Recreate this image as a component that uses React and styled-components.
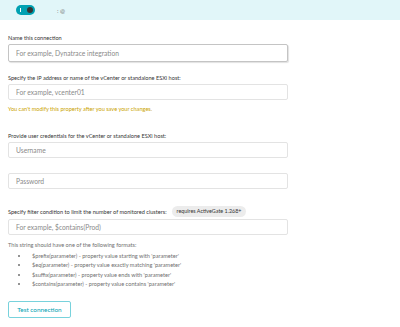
import React from 'react';
import styled, { createGlobalStyle } from 'styled-components';

const formats = [
  ["$prefix(parameter)", "property value starting with 'parameter'"],
  ["$eq(parameter)", "property value exactly matching 'parameter'"],
  ["$suffix(parameter)", "property value ends with 'parameter'"],
  ["$contains(parameter)", "property value contains 'parameter'"],
];

export default function App() {
  return (
    <>
      <GlobalStyle />
      <Banner>
        <Toggle><Knob /></Toggle>
        <BannerText>: @</BannerText>
      </Banner>
      <Form>
        <Label>Name this connection</Label>
        <Input $focused placeholder="For example, Dynatrace integration" />

        <Label $top={12}>Specify the IP address or name of the vCenter or standalone ESXi host:</Label>
        <Input placeholder="For example, vcenter01" />
        <Warning>You can't modify this property after you save your changes.</Warning>

        <Label $top={20}>Provide user credentials for the vCenter or standalone ESXi host:</Label>
        <Input placeholder="Username" />
        <Input $top={15} placeholder="Password" />

        <LabelRow>
          <span>Specify filter condition to limit the number of monitored clusters:</span>
          <Badge>requires ActiveGate 1.268+</Badge>
        </LabelRow>
        <Input placeholder="For example, $contains(Prod)" />
        <Hint>This string should have one of the following formats:</Hint>
        <List>
          {formats.map(([fn, desc]) => (
            <li key={fn}>{fn} - {desc}</li>
          ))}
        </List>
        <Button>Test connection</Button>
      </Form>
    </>
  );
}

const GlobalStyle = createGlobalStyle`
  * { margin: 0; padding: 0; box-sizing: border-box; }
  html, body { background: #fff; font-family: Lato, 'Open Sans', sans-serif; color: #454646; }
`;

const Banner = styled.div`
  height: 20px;
  background: #e1f6f9;
  display: flex;
  align-items: center;
  padding-left: 16px;
  gap: 22px;
`;

const Toggle = styled.div`
  width: 19px;
  height: 10px;
  border-radius: 5px;
  background: #00a1b2;
  position: relative;
  &::before {
    content: '';
    position: absolute;
    left: 4px;
    top: 3px;
    width: 1px;
    height: 4px;
    background: #fff;
  }
`;

const Knob = styled.div`
  position: absolute;
  right: 2px;
  top: 2px;
  width: 6px;
  height: 6px;
  border-radius: 50%;
  background: #353535;
`;

const BannerText = styled.span`
  font-size: 6px;
  color: #777;
`;

const Form = styled.div`
  padding: 0 8px;
  width: 296px;
  display: flex;
  flex-direction: column;
  align-items: flex-start;
`;

const Label = styled.div`
  font-size: 5.6px;
  line-height: 7px;
  color: #353535;
  margin-top: ${p => p.$top ?? 14}px;
  margin-bottom: 3px;
`;

const LabelRow = styled.div`
  display: flex;
  align-items: center;
  gap: 5px;
  font-size: 5.6px;
  color: #353535;
  margin-top: 17px;
  margin-bottom: 2px;
`;

const Badge = styled.span`
  background: #ececec;
  border-radius: 6px;
  padding: 2px 5px;
  line-height: 7px;
  font-size: 5.4px;
  color: #353535;
`;

const Input = styled.input`
  width: 280px;
  height: ${p => (p.$focused ? 18 : 16)}px;
  margin-top: ${p => p.$top ?? 0}px;
  border: 1px solid ${p => (p.$focused ? '#c4c4c4' : '#e3e3e3')};
  border-radius: 2px;
  box-shadow: ${p => (p.$focused ? '1px 1px 1px rgba(0,0,0,0.12)' : 'none')};
  padding: 0 7px;
  font-family: Lato, 'Open Sans', sans-serif;
  font-size: 6.7px;
  outline: none;
  &::placeholder { color: #8a8a8a; }
`;

const Warning = styled.div`
  font-size: 5.6px;
  color: #caa300;
  margin-top: 5px;
`;

const Hint = styled.div`
  font-size: 5.6px;
  color: #707070;
  margin-top: 6px;
`;

const List = styled.ul`
  margin-top: 3px;
  padding-left: 21px;
  font-size: 5.6px;
  color: #707070;
  li { line-height: 9.3px; padding-left: 3px; }
`;

const Button = styled.button`
  margin-top: 13px;
  width: 63px;
  height: 17px;
  border: 1px solid #78d2dc;
  border-radius: 2px;
  background: #fff;
  color: #00a1b2;
  font-family: Lato, 'Open Sans', sans-serif;
  font-size: 6.4px;
`;
